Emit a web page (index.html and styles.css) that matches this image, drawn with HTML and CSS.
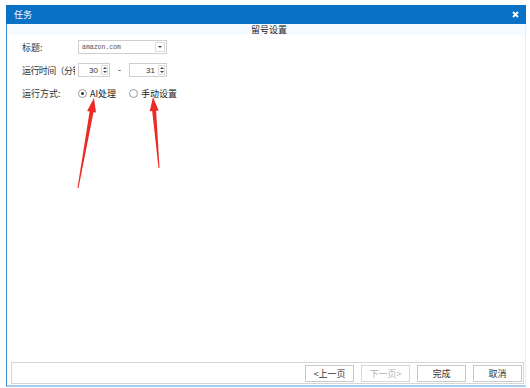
FILE: index.html
```html
<!DOCTYPE html>
<html>
<head>
<meta charset="utf-8">
<link rel="stylesheet" href="styles.css">
</head>
<body>
<div class="window">
  <div class="titlebar">
    <span class="title">任务</span>
    <svg class="close" width="7" height="7" viewBox="0 0 7 7"><path d="M1 1L6 6M6 1L1 6" stroke="#fff" stroke-width="1.8"/></svg>
  </div>
  <div class="body">
    <div class="header">留号设置</div>
    <div class="form">
      <div class="row">
        <div class="label">标题:</div>
        <div class="select">
          <span class="select-text">amazon.com</span>
          <span class="select-btn"><i class="tri-down"></i></span>
        </div>
      </div>
      <div class="row">
        <div class="label tight">运行时间（分钟）</div>
        <div class="spin spin1">
          <span class="spin-val">30</span>
          <span class="spin-btns"><i class="tri-up"></i><i class="tri-down small"></i></span>
        </div>
        <span class="dash">-</span>
        <div class="spin spin2">
          <span class="spin-val">31</span>
          <span class="spin-btns"><i class="tri-up"></i><i class="tri-down small"></i></span>
        </div>
      </div>
      <div class="row">
        <div class="label">运行方式:</div>
        <label class="radio"><span class="dot checked"></span>AI处理</label>
        <label class="radio second"><span class="dot"></span>手动设置</label>
      </div>
    </div>
    <div class="footer">
      <button class="btn">&lt;上一页</button>
      <button class="btn disabled">下一页&gt;</button>
      <button class="btn">完成</button>
      <button class="btn">取消</button>
    </div>
  </div>
</div>
<svg class="arrows" width="530" height="388" viewBox="0 0 530 388">
  <polygon fill="#ec2b27" points="94,98 96,112.6 93.5,112.2 78.5,188.1 77.5,187.9 89.6,111.45 87.1,111"/>
  <polygon fill="#ec2b27" points="153,97 158.66,110.57 156.17,110.78 159.5,167.96 158.5,168.04 152.19,111.12 149.7,111.33"/>
</svg>
</body>
</html>
```

FILE: styles.css
```css
html, body {
  margin: 0;
  padding: 0;
  background: #ffffff;
}
body {
  font-family: "Noto Sans CJK SC", "Noto Sans", sans-serif;
  font-size: 9px;
  color: #333;
  width: 530px;
  height: 388px;
  overflow: hidden;
}
.window {
  margin: 5px 0 0 6px;
  width: 520px;
  height: 382px;
  display: flex;
  flex-direction: column;
}
.titlebar {
  height: 19px;
  background: #0a72c6;
  display: flex;
  align-items: center;
  justify-content: space-between;
  padding: 0 7px 0 8px;
  flex: none;
}
.title {
  color: #fff;
  font-size: 9px;
  line-height: 19px;
}
.close {
  display: block;
}
.body {
  flex: 1;
  display: flex;
  flex-direction: column;
  border-left: 1px solid #3a8ad0;
  border-right: 1px solid #e8eef4;
  border-bottom: 2px solid #a8cdec;
}
.header {
  height: 11px;
  line-height: 11px;
  text-align: center;
  background: #f5fbfe;
  color: #222;
  font-size: 9px;
  padding-left: 6px;
}
.form {
  flex: 1;
  padding: 5px 0 0 15px;
  display: flex;
  flex-direction: column;
  gap: 9px;
}
.row {
  height: 14px;
  display: flex;
  align-items: center;
}
.label {
  width: 53px;
  margin-right: 3px;
  white-space: nowrap;
  overflow: hidden;
  color: #333;
}
.label.tight {
  letter-spacing: -0.6px;
}
.select {
  width: 87px;
  height: 12px;
  border: 1px solid #cfcfcf;
  display: flex;
  align-items: center;
  justify-content: space-between;
}
.select-text {
  font-family: "Liberation Mono", monospace;
  font-size: 6.5px;
  color: #555;
  padding-left: 3px;
}
.select-btn {
  width: 10px;
  height: 10px;
  margin-right: 1px;
  border: 1px solid #dcdcdc;
  box-sizing: border-box;
  display: flex;
  align-items: center;
  justify-content: center;
}
.tri-down {
  display: block;
  width: 0;
  height: 0;
  border-left: 2px solid transparent;
  border-right: 2px solid transparent;
  border-top: 2.5px solid #444;
}
.tri-up {
  display: block;
  width: 0;
  height: 0;
  border-left: 2px solid transparent;
  border-right: 2px solid transparent;
  border-bottom: 2.5px solid #444;
}
.spin {
  height: 12px;
  border: 1px solid #cfcfcf;
  display: flex;
  align-items: center;
  justify-content: flex-end;
}
.spin1 { width: 30px; }
.spin2 { width: 36px; }
.spin-val {
  font-family: "Liberation Sans", sans-serif;
  font-size: 8px;
  color: #333;
  margin-right: 3px;
}
.spin-btns {
  width: 7px;
  height: 10px;
  margin-right: 1px;
  border: 1px solid #dcdcdc;
  box-sizing: border-box;
  display: flex;
  flex-direction: column;
  align-items: center;
  justify-content: space-around;
}
.dash {
  width: 19px;
  text-align: center;
  font-family: "Liberation Sans", sans-serif;
  font-size: 9px;
}
.radio {
  display: flex;
  align-items: center;
  gap: 3px;
  color: #222;
}
.radio.second {
  margin-left: 13px;
}
.dot {
  width: 7px;
  height: 7px;
  border: 1px solid #9a9a9a;
  border-radius: 50%;
  display: flex;
  align-items: center;
  justify-content: center;
  background: #fff;
}
.dot.checked::after {
  content: "";
  width: 3px;
  height: 3px;
  border-radius: 50%;
  background: #333;
}
.footer {
  height: 20px;
  margin: 0 1px 1px 4px;
  border: 1px solid #d6d6d6;
  display: flex;
  align-items: center;
  justify-content: flex-end;
  gap: 7px;
  padding-right: 1px;
}
.btn {
  width: 49px;
  height: 17px;
  border: 1px solid #c9c9c9;
  background: #fff;
  font-family: "Noto Sans CJK SC", sans-serif;
  font-size: 9px;
  color: #333;
  padding: 0;
  margin: 0;
  line-height: 15px;
}
.btn.disabled {
  color: #b0b0b0;
  border-color: #d8d8d8;
}
.arrows {
  position: absolute;
  left: 0;
  top: 0;
  pointer-events: none;
}
```
